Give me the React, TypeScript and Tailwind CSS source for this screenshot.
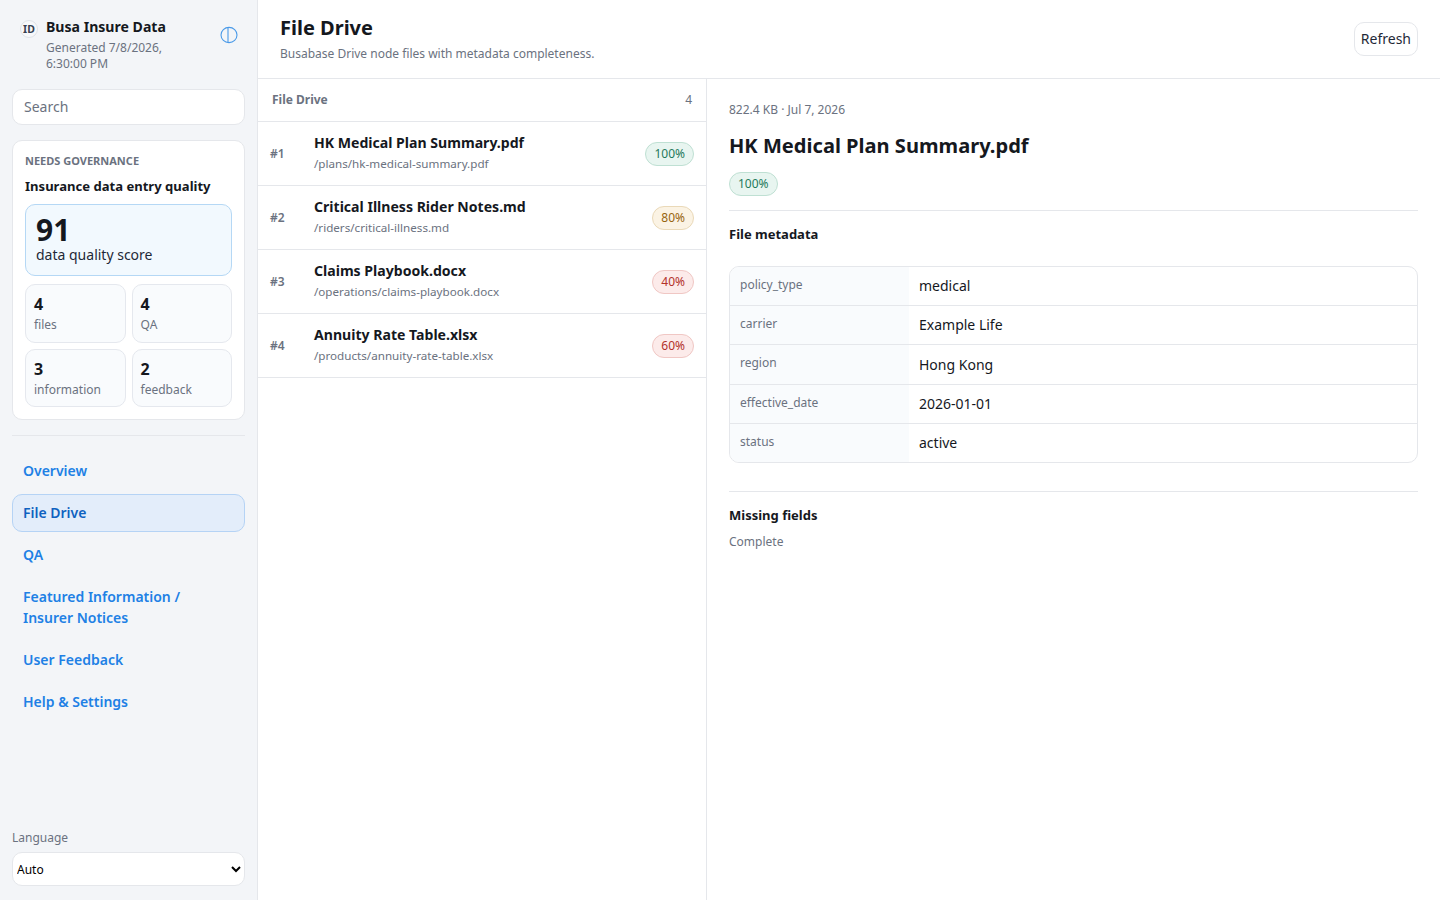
import React from 'react'

const files = [
  { rank: '#1', name: 'HK Medical Plan Summary.pdf', path: '/plans/hk-medical-summary.pdf', pct: '100%', tone: 'green' },
  { rank: '#2', name: 'Critical Illness Rider Notes.md', path: '/riders/critical-illness.md', pct: '80%', tone: 'amber' },
  { rank: '#3', name: 'Claims Playbook.docx', path: '/operations/claims-playbook.docx', pct: '40%', tone: 'red' },
  { rank: '#4', name: 'Annuity Rate Table.xlsx', path: '/products/annuity-rate-table.xlsx', pct: '60%', tone: 'red' },
]

const meta = [
  ['policy_type', 'medical'],
  ['carrier', 'Example Life'],
  ['region', 'Hong Kong'],
  ['effective_date', '2026-01-01'],
  ['status', 'active'],
]

const tones: Record<string, string> = {
  green: 'bg-[#e8f5f0] border-[#bfe0d3] text-[#1f7a5c]',
  amber: 'bg-[#fbf3e4] border-[#ead9b8] text-[#97650f]',
  red: 'bg-[#fcebea] border-[#f0c7c4] text-[#b3322b]',
}

function Pill({ tone, children }: { tone: string; children: React.ReactNode }) {
  return (
    <span className={`inline-flex items-center h-[24px] px-2 rounded-full border text-[12px] ${tones[tone]}`}>
      {children}
    </span>
  )
}

function Stat({ value, label }: { value: number; label: string }) {
  return (
    <div className="rounded-[10px] border border-[#e5e8ee] bg-[#f9fbfd] px-2 pt-[8px] pb-[7.5px]">
      <div className="text-[16px] leading-[22px] font-bold text-[#15181e]">{value}</div>
      <div className="mt-[1px] text-[12px] leading-[18px] text-[#6b7280]">{label}</div>
    </div>
  )
}

function NavItem({ active, children }: { active?: boolean; children: React.ReactNode }) {
  return (
    <a
      className={
        active
          ? 'block rounded-[10px] border border-[#b5d3f5] bg-[#e3edfa] pl-[10px] pr-[14px] pt-[7px] pb-[8px] text-[14px] leading-[21px] font-semibold text-[#0f62c0]'
          : 'block rounded-[10px] border border-transparent pl-[10px] pr-[14px] pt-[7px] pb-[8px] text-[14px] leading-[21px] font-semibold text-[#2080e5]'
      }
    >
      {children}
    </a>
  )
}

export default function App() {
  return (
    <div className="flex h-[900px] overflow-hidden bg-white text-[#15181e] font-['Noto_Sans',sans-serif]">
      <aside className="flex w-[258px] shrink-0 flex-col border-r border-[#e5e7eb] bg-[#f3f5f8] px-3 pb-[14px]">
        <div className="flex items-start justify-between pt-[16px] pl-[8px] pr-[7.5px]">
          <div className="flex gap-2">
            <div className="mt-[4px] flex h-[18px] w-[18px] shrink-0 items-center justify-center rounded-full border border-[#dfe3e8] bg-[#f7f8fa] text-[10.5px] leading-none font-bold text-[#374151]">
              ID
            </div>
            <div>
              <div className="text-[14.08px] leading-[22px] font-bold">Busa Insure Data</div>
              <div className="w-[140px] text-[12px] leading-[16px] text-[#6b7280] mt-[2px]">Generated 7/8/2026, 6:30:00 PM</div>
            </div>
          </div>
          <svg className="mt-[9.5px]" width="18" height="18" viewBox="0 0 18 18" fill="none" stroke="#4a9ae8" strokeWidth="1.1">
            <ellipse cx="9" cy="9" rx="8" ry="7.6" />
            <path d="M8 1.5v15" />
          </svg>
        </div>

        <div className="mt-[17px] flex h-[36px] items-center rounded-[10px] border border-[#e5e7eb] bg-white px-[11px] pb-[2px] text-[14px] text-[#6b7280]">
          Search
        </div>

        <div className="mt-[15px] rounded-[10px] border border-[#e5e7eb] bg-white px-3 pt-[12px] pb-[12px]">
          <div className="text-[11px] leading-[16px] font-bold text-[#6b7280] uppercase">Needs governance</div>
          <div className="mt-[8px] text-[13.07px] leading-[18px] font-bold">Insurance data entry quality</div>
          <div className="mt-[9px] h-[72px] rounded-[10px] border border-[#b5d8f5] bg-[#f2f9fe] px-[10px] pt-[8px]">
            <div className="text-[30px] leading-[33px] font-bold">91</div>
            <div className="text-[14px] leading-[18px] text-[#1f2937]">data quality score</div>
          </div>
          <div className="mt-2 grid grid-cols-2 gap-[6px]">
            <Stat value={4} label="files" />
            <Stat value={4} label="QA" />
            <Stat value={3} label="information" />
            <Stat value={2} label="feedback" />
          </div>
        </div>

        <div className="mt-[15px] border-t border-[#e5e7eb]" />

        <nav className="mt-[15.5px] flex flex-col gap-[4px]">
          <NavItem>Overview</NavItem>
          <NavItem active>File Drive</NavItem>
          <NavItem>QA</NavItem>
          <NavItem>Featured Information / Insurer Notices</NavItem>
          <NavItem>User Feedback</NavItem>
          <NavItem>Help &amp; Settings</NavItem>
        </nav>

        <div className="mt-auto">
          <div className="text-[12px] leading-[18px] text-[#6b7280]">Language</div>
          <select className="mt-[5px] h-[34px] w-full rounded-[10px] border border-[#e5e7eb] bg-white pl-0 text-[12px] text-black">
            <option>Auto</option>
          </select>
        </div>
      </aside>

      <main className="flex min-w-0 flex-1 flex-col">
        <header className="flex h-[79px] shrink-0 items-center justify-between border-b border-[#e5e7eb] pl-[22px] pr-[22px]">
          <div className="pb-[2px]">
            <h1 className="text-[20px] leading-[28px] font-bold">File Drive</h1>
            <p className="mt-[3px] text-[12px] leading-[18px] text-[#6b7280]">Busabase Drive node files with metadata completeness.</p>
          </div>
          <button className="h-[34px] rounded-[10px] border border-[#e5e7eb] bg-white px-[6px] pb-[2px] text-[14px] text-[#1f2937]">Refresh</button>
        </header>

        <div className="flex min-h-0 flex-1">
          <section className="w-[449px] shrink-0 border-r border-[#e5e7eb]">
            <div className="flex h-[43px] items-center justify-between border-b border-[#e5e7eb] px-[14px]">
              <span className="text-[12px] font-bold text-[#6b7280]">File Drive</span>
              <span className="text-[12px] text-[#6b7280]">4</span>
            </div>
            {files.map((f) => (
              <div key={f.rank} className="flex h-[64px] items-center border-b border-[#e5e7eb] pl-3 pr-3">
                <span className="w-[44px] shrink-0 text-[12px] font-semibold text-[#6b7280]">{f.rank}</span>
                <div className="min-w-0 flex-1 pb-[3px]">
                  <div className="text-[14.08px] leading-[20px] font-bold">{f.name}</div>
                  <div className="mt-[3px] text-[11.65px] leading-[16px] text-[#6b7280]">{f.path}</div>
                </div>
                <Pill tone={f.tone}>{f.pct}</Pill>
              </div>
            ))}
          </section>

          <section className="min-w-0 flex-1 px-[22px] pt-[22px]">
            <div className="text-[12px] leading-[18px] text-[#6b7280]">822.4 KB · Jul 7, 2026</div>
            <h2 className="mt-[13px] text-[20.08px] leading-[28px] font-bold">HK Medical Plan Summary.pdf</h2>
            <div className="mt-[12px] flex"><Pill tone="green">100%</Pill></div>
            <div className="mt-[14px] border-t border-[#e5e7eb]" />
            <h3 className="mt-[14px] text-[13px] leading-[18px] font-bold">File metadata</h3>
            <div className="mt-[23px] overflow-hidden rounded-[10px] border border-[#e5e7eb]">
              {meta.map(([k, v], i) => (
                <div key={k} className={i > 0 ? 'flex h-[39.2px] border-t border-[#e5e7eb]' : 'flex h-[38.25px]'}>
                  <div className="w-[179px] shrink-0 bg-[#f9fbfd] px-[10px] pt-[9px] text-[12px] leading-[18px] text-[#6b7280]">{k}</div>
                  <div className="flex items-center px-[10px] pb-[1px] text-[14px]">{v}</div>
                </div>
              ))}
            </div>
            <div className="mt-[28px] border-t border-[#e5e7eb]" />
            <h3 className="mt-[14px] text-[13px] leading-[18px] font-bold">Missing fields</h3>
            <div className="mt-[9px] text-[12px] leading-[18px] text-[#6b7280]">Complete</div>
          </section>
        </div>
      </main>
    </div>
  )
}
